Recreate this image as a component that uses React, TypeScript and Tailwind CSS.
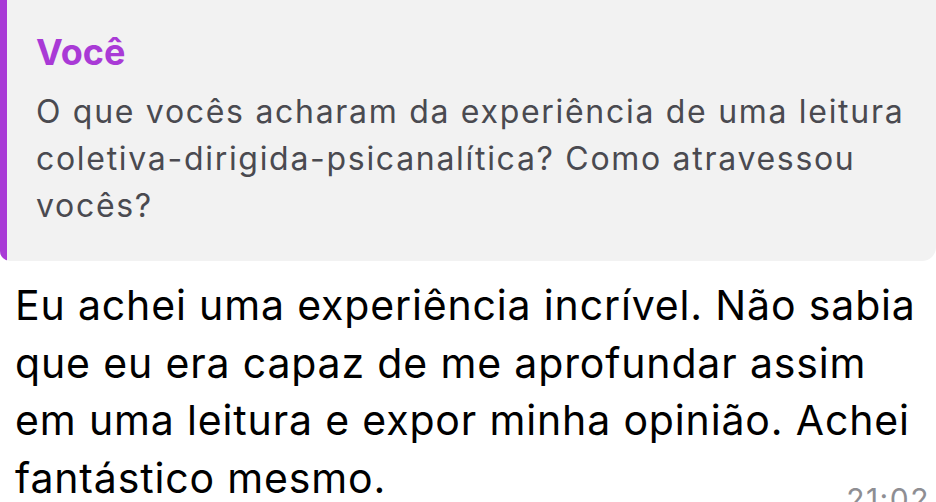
export default function App() {
  return (
    <div className="w-[936px] h-[502px] overflow-hidden bg-white font-['Inter',_'Noto_Sans',_sans-serif]">
      <div className="flex h-[261px] rounded-br-[14px] rounded-bl-[10px] overflow-hidden bg-[#f2f2f2]">
        <div className="w-[7px] shrink-0 bg-[#a93ad6]"></div>
        <div className="pl-[29px] pt-[28px] pr-4">
          <div className="text-[36px] leading-[48px] font-bold text-[#a93ad6]">Você</div>
          <p className="mt-[12px] text-[32px] leading-[47px] tracking-[1.7px] text-[#4a4a50]">
            O que vocês acharam da experiência de uma leitura coletiva-dirigida-psicanalítica? Como atravessou vocês?
          </p>
        </div>
      </div>
      <div className="relative pl-[15px] pr-[10px] pt-[16px]">
        <p className="text-[41px] leading-[57.5px] tracking-[0.85px] text-black">
          Eu achei uma experiência incrível. Não sabia que eu era capaz de me aprofundar assim em uma leitura e expor minha opinião. Achei fantástico mesmo.
        </p>
        <span className="absolute right-[6px] top-[218px] text-[30px] leading-[40px] tracking-[1.5px] text-[#8e8e93]">21:02</span>
      </div>
    </div>
  )
}
